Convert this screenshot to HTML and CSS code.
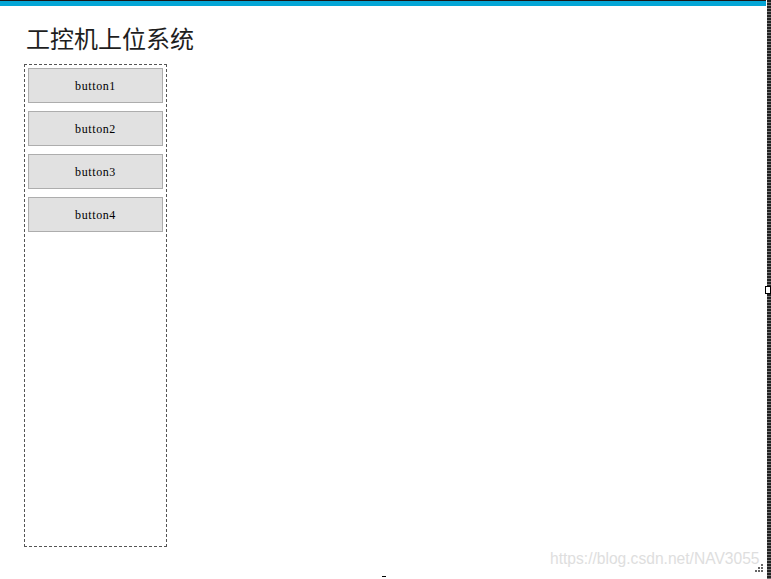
FILE: index.html
```html
<!DOCTYPE html>
<html lang="zh-CN">
<head>
<meta charset="utf-8">
<title>工控机上位系统</title>
<link rel="stylesheet" href="styles.css">
</head>
<body>
<div class="frame">
  <div class="main">
    <div class="topbar"></div>
    <div class="content">
      <h1 class="title">工控机上位系统</h1>
      <div class="panel">
        <button class="btn">button1</button>
        <button class="btn">button2</button>
        <button class="btn">button3</button>
        <button class="btn">button4</button>
      </div>
    </div>
  </div>
  <div class="edge"></div>
  <div class="handle"></div>
  <div class="watermark">https://blog.csdn.net/NAV3055</div>
  <div class="grip">
    <span></span><span></span><span></span><span></span><span></span><span></span>
  </div>
  <div class="tick"></div>
</div>
</body>
</html>
```
FILE: styles.css
```css
html, body {
  margin: 0;
  padding: 0;
  background: #fff;
}
.frame {
  position: relative;
  width: 771px;
  height: 579px;
  display: flex;
  overflow: hidden;
}
.main {
  flex: 1;
  display: flex;
  flex-direction: column;
}
.topbar {
  height: 5px;
  border-top: 1px solid #1a1a1a;
  background: #04a6d6;
}
.content {
  padding: 17px 0 0 24px;
}
.title {
  margin: 0 0 12px 2px;
  font-family: "Noto Sans CJK SC", sans-serif;
  font-weight: 400;
  font-size: 24px;
  line-height: 29px;
  color: #1e1e1e;
}
.panel {
  width: 135px;
  height: 475px;
  padding: 3px;
  border: 1px dashed #555;
  display: flex;
  flex-direction: column;
  gap: 8px;
}
.btn {
  width: 135px;
  height: 35px;
  margin: 0;
  padding: 1px 0 0;
  background: #e1e1e1;
  border: 1px solid #adadad;
  font-family: "Liberation Serif", serif;
  font-size: 12px;
  letter-spacing: 0.6px;
  color: #000;
}
.edge {
  width: 4px;
  background: repeating-linear-gradient(to bottom, #222 0, #222 2px, #777 2px, #777 3px);
  border-left: 1px solid #fff;
}
.handle {
  position: absolute;
  right: 0;
  top: 286px;
  width: 4px;
  height: 6px;
  background: #fff;
  border: 1px solid #000;
}
.watermark {
  position: absolute;
  left: 550px;
  top: 550px;
  font-family: "Liberation Sans", sans-serif;
  font-size: 15.6px;
  color: #dedede;
}
.grip {
  position: absolute;
  left: 755px;
  top: 564px;
  width: 9px;
  height: 9px;
}
.grip span {
  position: absolute;
  width: 2px;
  height: 2px;
  background: #666;
}
.grip span:nth-child(1) { left: 6px; top: 0; }
.grip span:nth-child(2) { left: 3px; top: 3px; }
.grip span:nth-child(3) { left: 6px; top: 3px; }
.grip span:nth-child(4) { left: 0; top: 6px; }
.grip span:nth-child(5) { left: 3px; top: 6px; }
.grip span:nth-child(6) { left: 6px; top: 6px; }
.tick {
  position: absolute;
  left: 382px;
  top: 576px;
  width: 4px;
  height: 1px;
  background: #000;
}
```
